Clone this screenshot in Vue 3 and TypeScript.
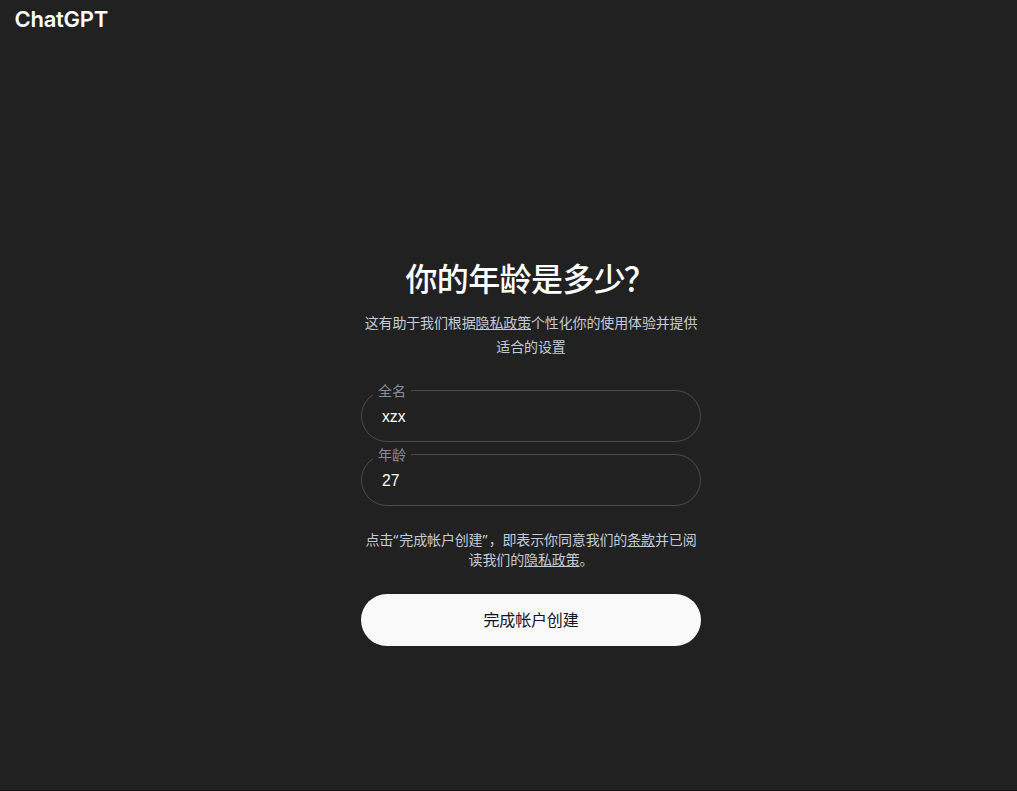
<script setup lang="ts">
import { ref } from 'vue'

const fullName = ref('xzx')
const age = ref('27')
</script>

<template>
  <div class="page">
    <header class="brand">ChatGPT</header>
    <main class="panel">
      <h1 class="title">你的年龄是多少<span class="mark">？</span></h1>
      <p class="intro">这有助于我们根据<a class="link">隐私政策</a>个性化你的使用体验并提供<br />适合的设置</p>
      <form class="form" @submit.prevent>
        <div class="field">
          <input v-model="fullName" class="input name" type="text" spellcheck="false" />
          <label class="label">全名</label>
        </div>
        <div class="field">
          <input v-model="age" class="input" type="text" />
          <label class="label">年龄</label>
        </div>
        <p class="terms">点击<span class="quote">“</span>完成帐户创建<span class="quote">”</span>，即表示你同意我们的<a class="link">条款</a>并已阅<br />读我们的<a class="link">隐私政策</a>。</p>
        <button class="submit" type="submit">完成帐户创建</button>
      </form>
    </main>
  </div>
</template>

<style>
body {
  margin: 0;
  background: #212121;
}
</style>

<style scoped>
.page {
  box-sizing: border-box;
  width: 100%;
  height: 791px;
  overflow: hidden;
  background: #212121;
  border-bottom: 1px solid #1a1114;
  color: #fff;
  font-family: "Liberation Sans", "Noto Sans CJK SC", sans-serif;
}
.brand {
  height: 40px;
  padding-left: 14.5px;
  font-family: Inter, "Liberation Sans", sans-serif;
  font-size: 22px;
  font-weight: 600;
  line-height: 39px;
  letter-spacing: -0.25px;
}
.panel {
  width: 340px;
  margin: 217px 0 0 361px;
}
.title {
  margin: 0;
  font-family: "Noto Sans CJK SC", sans-serif;
  font-size: 32px;
  font-weight: 500;
  line-height: 40px;
  letter-spacing: -0.6px;
  text-align: center;
  white-space: nowrap;
}
.mark {
  margin: 0 1.5px 0 -1.5px;
}
.intro,
.terms {
  margin: 14px 0 0;
  color: #c3cbd6;
  font-size: 14px;
  line-height: 24px;
  letter-spacing: -0.14px;
  text-align: center;
  white-space: nowrap;
}
.link {
  color: inherit;
  text-decoration: underline;
}
.quote {
  font-family: "Noto Sans", sans-serif;
  line-height: 1;
  letter-spacing: 1.1px;
}
.form {
  display: flex;
  flex-direction: column;
  gap: 12px;
  margin-top: 31px;
}
.field {
  position: relative;
  height: 52px;
}
.input {
  box-sizing: border-box;
  display: block;
  width: 100%;
  height: 52px;
  padding: 1px 20px 0;
  border: 1px solid #4b4b4d;
  border-radius: 26px;
  outline: none;
  background: transparent;
  color: #fff;
  font-family: "Liberation Sans", sans-serif;
  font-size: 15.7px;
}
.name {
  padding-top: 2px;
}
.label {
  position: absolute;
  top: -9px;
  left: 12px;
  padding: 0 5px;
  background: #212121;
  color: #858d9a;
  font-size: 14px;
  line-height: 20px;
  letter-spacing: -0.1px;
}
.terms {
  margin-top: 12px;
  line-height: 20px;
}
.submit {
  height: 52px;
  margin-top: 12px;
  padding: 0 0 2px;
  border: 0;
  border-radius: 26px;
  background: #f9f9f9;
  color: #15152a;
  font-family: "Noto Sans CJK SC", sans-serif;
  font-size: 16px;
  letter-spacing: -0.16px;
}
</style>
